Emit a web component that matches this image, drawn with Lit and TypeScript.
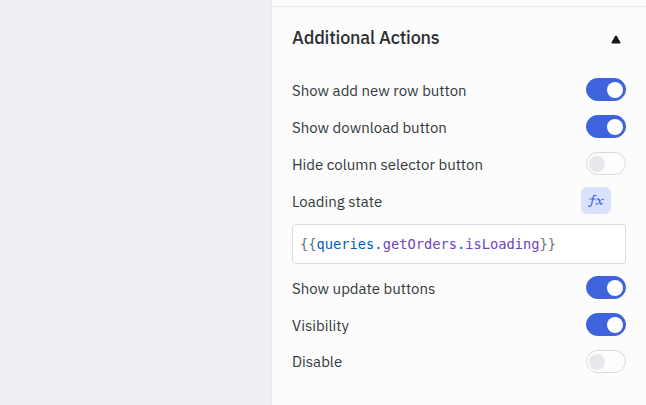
import { LitElement, html, css } from "lit";
import { customElement, property } from "lit/decorators.js";

@customElement("toggle-switch")
class ToggleSwitch extends LitElement {
  @property({ type: Boolean, reflect: true }) on = false;
  static styles = css`
    :host { display: block; flex: none; }
    .track {
      box-sizing: border-box; width: 40px; height: 23px; border-radius: 12px;
      border: 1px solid #d7dbdf; background: #fdfdfd; padding: 0 2px;
      display: flex; align-items: center;
    }
    .knob { width: 16px; height: 16px; border-radius: 50%; background: #e6e8eb; }
    :host([on]) .track { background: #3e63dd; border-color: #3e63dd; justify-content: flex-end; }
    :host([on]) .knob { background: #fff; }
  `;
  render() {
    return html`<div class="track"><div class="knob"></div></div>`;
  }
}

@customElement("setting-row")
class SettingRow extends LitElement {
  @property() label = "";
  static styles = css`
    :host { display: flex; height: 37px; align-items: center; justify-content: space-between; }
    .label { font-size: 15px; line-height: 20px; padding-top: 2px; color: #33383b; white-space: nowrap; }
    :host(:last-child) .label { padding-top: 0; }
  `;
  render() {
    return html`<span class="label">${this.label}</span><slot></slot>`;
  }
}

@customElement("app-root")
class AppRoot extends LitElement {
  static styles = css`
    :host {
      display: flex; width: 646px; height: 405px; overflow: hidden; background: #edeff5;
      font-family: "IBM Plex Sans", Roboto, sans-serif;
    }
    .canvas { width: 271px; flex: none; }
    .panel { flex: 1; background: #fcfcfc; border-left: 1px solid #e6e8eb; }
    .above { height: 6px; border-bottom: 1px solid #e6e8eb; }
    .content { padding: 0 20px; }
    .header { height: 64px; display: flex; justify-content: space-between; }
    .title { font-size: 18px; line-height: 24px; font-weight: 500; letter-spacing: -0.19px; color: #2b2f31; padding-top: 19px; }
    .caret { width: 10px; height: 9px; margin: 28px 5px 0 0; }
    .fx {
      width: 30px; height: 27px; border-radius: 6px; background: #d9e2fc; margin-right: 15px;
      display: flex; align-items: center; justify-content: center;
    }
    .code {
      box-sizing: border-box; height: 40px; margin: 5px 0; padding: 0 7px;
      border: 1px solid #d7dbdf; border-radius: 4px; background: #fff;
      font: 13.7px/38px "DejaVu Sans Mono", monospace; letter-spacing: 0.02px; white-space: pre;
    }
    .brace { color: #6a737d; }
    .var { color: #005cc5; }
    .prop { color: #6f42c1; }
  `;
  render() {
    return html`
      <div class="canvas"></div>
      <div class="panel">
        <div class="above"></div>
        <div class="content">
          <div class="header">
            <div class="title">Additional Actions</div>
            <svg class="caret" viewBox="0 0 10 9"><path d="M4.1 1.2Q5 0 5.9 1.2L9.3 7Q9.9 8.5 8.5 8.5H1.5Q.1 8.5.7 7Z" fill="#11181c"/></svg>
          </div>
          <setting-row label="Show add new row button"><toggle-switch on></toggle-switch></setting-row>
          <setting-row label="Show download button"><toggle-switch on></toggle-switch></setting-row>
          <setting-row label="Hide column selector button"><toggle-switch></toggle-switch></setting-row>
          <setting-row label="Loading state">
            <div class="fx">
              <svg width="18" height="16" viewBox="0 0 18 16" fill="none" stroke="#3e63dd" stroke-linecap="round">
                <path stroke-width="1.2" d="M8.9 2.7C7.6 1.8 6.4 2.7 6 4.6L4.7 11C4.3 13 3 13.8 1.6 13M2.9 6H8.1"/>
                <path stroke-width="1.3" d="M11.2 6C12 6 12.2 6.8 12.5 8L13 9.8C13.3 11 13.9 11.3 14.6 11"/>
                <path stroke-width=".9" d="M9.6 7C10.1 6.2 10.6 5.9 11.2 6M16.4 6.4C15.3 5.5 14.2 6.6 12.9 8.5C11.6 10.4 10.5 11.9 9.2 10.9M14.6 11Q15.3 10.8 15.8 10"/>
                <path stroke-width="1.2" d="M16.2 6.5h.1M9.3 10.9h.1"/>
              </svg>
            </div>
          </setting-row>
          <div class="code"><span class="brace">{{</span><span class="var">queries</span><span class="var">.</span><span class="prop">getOrders</span><span class="var">.</span><span class="prop">isLoading</span><span class="brace">}}</span></div>
          <setting-row label="Show update buttons"><toggle-switch on></toggle-switch></setting-row>
          <setting-row label="Visibility"><toggle-switch on></toggle-switch></setting-row>
          <setting-row label="Disable"><toggle-switch></toggle-switch></setting-row>
        </div>
      </div>
    `;
  }
}
